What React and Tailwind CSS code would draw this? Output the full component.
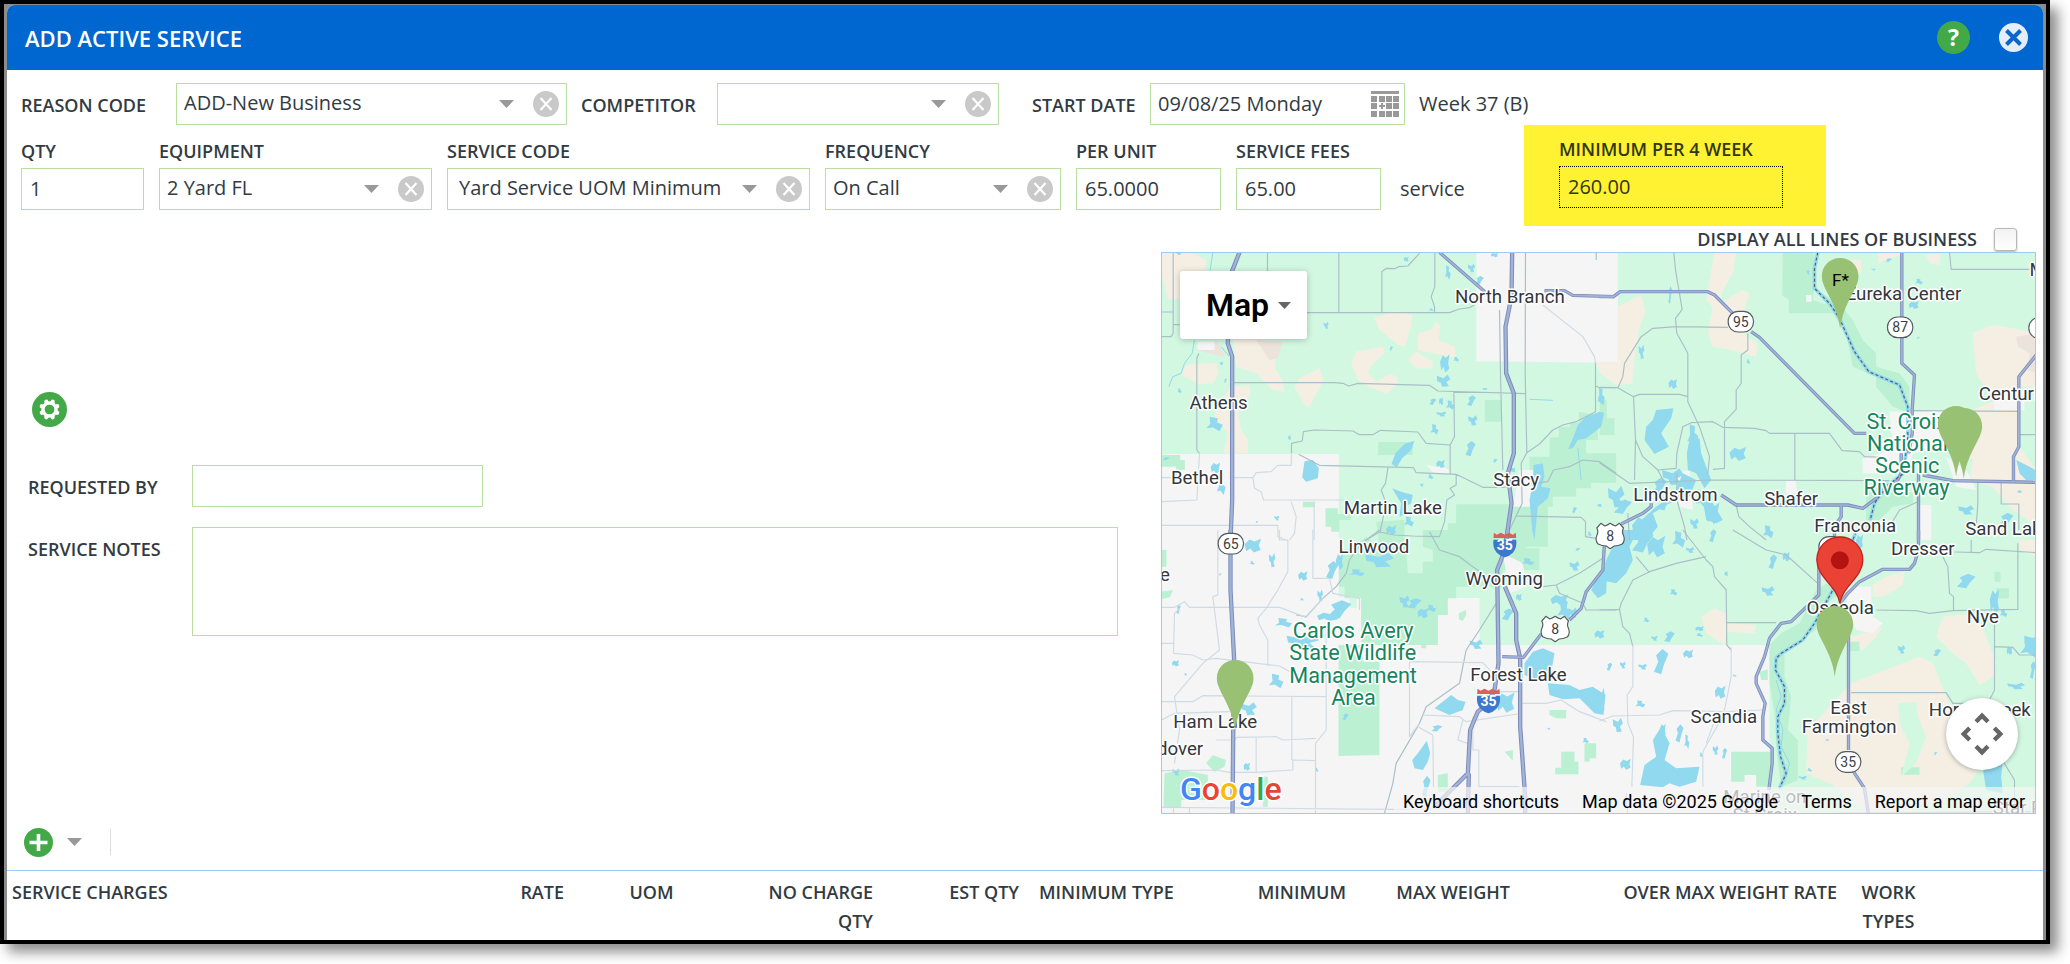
import React from "react";

const LABEL = "text-[18px] leading-6 font-semibold text-[#323b42] whitespace-nowrap";
const VALUE = "text-[20px] leading-6 text-[#323b42]";
const BOX = "h-[42px] border border-[#b9df9f] bg-white";

function Caret() {
  return (
    <svg className="h-2 w-[15px] shrink-0" viewBox="0 0 15 8" aria-hidden="true">
      <path d="M0 0H15L7.5 8Z" fill="#999999" />
    </svg>
  );
}

function ClearButton({ label }) {
  return (
    <button type="button" aria-label={label} className="size-[26px] shrink-0">
      <svg viewBox="0 0 26 26" className="size-full">
        <circle cx="13" cy="13" r="13" fill="#c9c9c9" />
        <path d="M7.5 7L18.5 19M18.5 7L7.5 19" stroke="#fff" strokeWidth="2.2" fill="none" />
      </svg>
    </button>
  );
}

function ComboBox({ id, value, name, className }) {
  return (
    <div className={`flex items-center ${BOX} pr-[7px] ${className}`}>
      <select id={id} defaultValue={value} className={`h-full min-w-0 flex-1 appearance-none bg-transparent pb-0.5 outline-none ${VALUE}`}>
        <option value={value}>{value}</option>
      </select>
      <Caret />
      <span className="w-[19px] shrink-0" />
      <ClearButton label={`Clear ${name}`} />
    </div>
  );
}

function Field({ id, label, children }) {
  return (
    <div className="flex flex-col gap-[5px] pt-3.5">
      <label htmlFor={id} className={LABEL}>{label}</label>
      {children}
    </div>
  );
}

function CalendarIcon() {
  const cells = [];
  [5, 12, 20].forEach((y, r) =>
    [0, 8, 15, 22].forEach((x, c) => {
      if (r === 1 && c === 1) return;
      cells.push(<rect key={`${r}${c}`} x={x} y={y} width="6" height="6" />);
    })
  );
  return (
    <svg viewBox="0 0 28 26" className="h-[26px] w-7" fill="#999999">
      <rect width="28" height="3" />
      {cells}
      <path d="M10 12H12V14H14V16H12V18H10V16H8V14H10Z" />
    </svg>
  );
}

/* ---------- map drawing ---------- */

/* Each layer is drawn in four tiles: north-west, north-east, south-west, south-east. */
function Layer({ nw, ne, sw, se, ...rest }) {
  return (
    <g {...rest}>
      {nw && <path d={nw} />}
      {ne && <path d={ne} transform="translate(1350 0)" />}
      {sw && <path d={sw} transform="translate(0 870)" />}
      {se && <path d={se} transform="translate(1350 870)" />}
    </g>
  );
}

const blobShapes = [
  "M-50 -10L-20 -45L10 -30L50 -50L35 0L48 30L5 50L-15 20L-40 40Z",
  "M-30 -50L20 -40L15 -10L50 5L30 50L-10 25L-50 30L-25 0Z",
  "M-50 -40L0 -20L30 -50L50 -10L20 10L40 45L-10 50L-20 15L-45 5Z",
  "M10 -50L50 -30L20 10L0 50L-50 40L-20 0L-35 -25Z",
];

/* x, y, width, height */
const lakes = [
  [770, 58, 14, 14], [895, 98, 16, 40], [966, 84, 20, 24], [990, 121, 24, 24], [1035, 45, 20, 12],
  [845, 209, 14, 8], [530, 256, 14, 20], [725, 325, 10, 12], [886, 370, 26, 50], [920, 358, 16, 14],
  [882, 422, 38, 34], [850, 485, 20, 18], [875, 484, 12, 22], [902, 495, 24, 26], [876, 522, 28, 14],
  [966, 482, 24, 30], [1006, 447, 14, 6], [855, 568, 22, 30], [970, 541, 26, 28], [963, 626, 28, 42],
  [873, 672, 24, 22], [843, 710, 16, 14], [817, 735, 10, 10], [1037, 662, 14, 10], [1090, 690, 16, 14],
  [90, 452, 12, 14], [216, 370, 10, 10], [228, 422, 8, 12], [420, 593, 8, 14], [195, 552, 46, 40],
  [88, 41, 14, 8], [50, 656, 20, 8], [198, 684, 26, 30], [215, 738, 24, 50], [382, 834, 14, 14],
  [322, 846, 8, 6], [725, 870, 28, 26], [778, 845, 28, 28], [1355, 478, 16, 24], [1275, 810, 14, 16],
  [1350, 796, 12, 10], [1320, 882, 12, 14],
  [1476, 335, 16, 40], [1562, 165, 10, 50], [1570, 432, 24, 28], [1796, 365, 10, 14], [1976, 97, 8, 14],
  [2218, 60, 20, 10], [2293, 195, 28, 22], [2308, 125, 22, 16], [2172, 88, 12, 6], [2306, 293, 10, 5],
  [1765, 642, 46, 38], [1355, 470, 20, 50], [1400, 770, 46, 60], [1420, 800, 50, 40], [1480, 862, 60, 60],
  [1856, 875, 30, 36], [2450, 810, 44, 26], [2570, 840, 40, 40], [2610, 755, 12, 8], [1630, 585, 30, 60],
  [1570, 710, 60, 46], [1530, 740, 40, 50], [1690, 820, 36, 60], [1655, 775, 30, 50], [1635, 850, 24, 30],
  [1545, 790, 26, 40],
  [310, 917, 46, 38], [308, 969, 14, 10], [368, 960, 18, 40], [212, 1003, 8, 6], [460, 1008, 26, 26],
  [457, 1078, 10, 8], [512, 1066, 16, 32], [548, 990, 34, 50], [570, 965, 20, 46], [622, 998, 44, 20],
  [690, 960, 80, 40], [570, 1108, 66, 50], [535, 1130, 60, 24], [402, 1148, 48, 26], [460, 1205, 90, 40],
  [87, 1108, 12, 26], [78, 1270, 20, 18], [108, 1303, 8, 8], [765, 1084, 28, 34], [795, 1090, 40, 28],
  [820, 1120, 30, 28], [845, 1105, 28, 20], [980, 1213, 36, 26], [1075, 1123, 34, 32], [1108, 1072, 16, 20],
  [1135, 965, 36, 20], [1275, 978, 28, 26], [1285, 928, 16, 8], [1350, 1183, 28, 24], [380, 1323, 40, 40],
  [298, 1406, 44, 36], [588, 1430, 18, 18], [292, 1580, 18, 22], [502, 1590, 8, 12], [80, 1596, 22, 20],
  [862, 1465, 30, 18], [1068, 1388, 50, 56], [1308, 1502, 18, 16], [1198, 1466, 8, 6], [830, 1640, 24, 60],
  [1230, 1080, 50, 30], [1245, 1110, 40, 50], [1270, 1118, 24, 30],
  [1480, 905, 60, 60], [1520, 920, 50, 60], [1588, 898, 36, 46], [1622, 930, 24, 16], [1690, 887, 20, 36],
  [1730, 1001, 10, 14], [1572, 1057, 22, 18], [1856, 1053, 36, 26], [1870, 965, 24, 40], [1910, 950, 20, 26],
  [1490, 1140, 16, 14], [1515, 1195, 18, 14], [1560, 1190, 30, 30], [1650, 1166, 24, 14], [1650, 1185, 20, 10],
  [1480, 1280, 24, 16], [1535, 1265, 40, 70], [1616, 1242, 28, 24], [1472, 1392, 28, 20], [1420, 1275, 16, 20],
  [1380, 1280, 16, 22], [1712, 1357, 30, 36], [1755, 1307, 12, 6], [1405, 1455, 28, 40], [1590, 1480, 22, 50],
  [1540, 1470, 16, 36], [1612, 1505, 14, 40], [1698, 1530, 16, 26], [1725, 1540, 14, 30], [1428, 1573, 30, 30],
  [1655, 1545, 10, 14], [1356, 1378, 20, 66], [2450, 1023, 52, 40], [2535, 1085, 26, 70], [2562, 1120, 22, 20],
  [2256, 1228, 20, 24], [2363, 1238, 22, 20], [2580, 1232, 16, 24], [2640, 1220, 50, 60], [2600, 1338, 50, 18],
  [2650, 1290, 16, 50], [2033, 1500, 10, 6], [1980, 1590, 14, 10], [1960, 1613, 24, 10], [2358, 1540, 10, 8],
  [2130, 905, 20, 40],
];

const bigLakes =
  "M465 664L490 660L508 685L505 715L470 725L458 712Z" +
  "M765 612L795 602L785 630L758 655L742 682L726 672L738 640Z" +
  "M1350 515L1364 518L1355 560L1330 580L1310 595L1285 600L1270 625L1256 628L1272 590L1285 555L1310 530Z" +
  "M1152 675L1180 670L1185 710L1175 740L1203 745L1195 775L1165 800L1155 900L1148 870L1140 780L1150 730Z" +
  "M728 745L755 755L790 765L785 790L760 805L770 820L750 830L755 790Z" +
  "M1150 1235L1180 1225L1215 1240L1208 1280L1190 1310L1160 1320L1125 1305L1125 1270Z" +
  "M1195 1330L1260 1335L1290 1350L1330 1340L1368 1365L1362 1425L1335 1420L1290 1375L1240 1378L1200 1365Z" +
  "M855 1405L905 1365L925 1380L948 1385L940 1410L900 1425Z" +
  "M832 1502L842 1540L835 1565L820 1590L795 1585L788 1560L805 1540Z" +
  "M1490 560L1510 540L1520 510L1572 505L1565 535L1535 580L1558 620L1515 642L1485 600Z" +
  "M1620 600L1650 595L1655 640L1670 680L1685 720L1665 745L1640 700L1615 690L1612 640Z" +
  "M1575 760L1600 700L1640 720L1620 770L1560 790L1510 820L1525 860L1490 900H1445L1465 850L1520 800Z" +
  "M1660 780L1690 790L1720 840L1700 850L1670 840Z" +
  "M1390 870H1465L1440 920L1450 960L1430 1000L1400 1030L1352 1020L1370 960L1390 920Z" +
  "M1350 1000L1372 1010L1370 1060L1345 1075L1325 1050Z" +
  "M1535 1460L1560 1510L1545 1560L1580 1585L1650 1580L1640 1625L1590 1640L1560 1630L1540 1642L1472 1635L1485 1575L1520 1550L1510 1500Z" +
  "M2600 660L2640 680L2658 690V720H2630L2610 700Z" +
  "M2500 1560H2560L2555 1610L2560 1660L2510 1650L2502 1600Z" +
  "M2625 1205L2658 1190V1245L2635 1240Z";

function MajorRoads(props) {
  return (
    <Layer
      fill="none"
      strokeLinejoin="round"
      nw="M270 37L245 100L235 310L248 350V780L243 900M1088 37L1086 170L1068 260L1070 400L1093 460V640L1075 700L1086 790L1070 900"
      sw="M243 0V180L254 390L252 500L249 860M1075 0L1066 60L1043 120L1047 400L1035 480L1015 520L985 545L962 600L955 730L860 825M958 730L955 860M1066 170L1100 250V330L1112 385V590L1127 800V860"
      {...props}
    />
  );
}

function MidRoads(props) {
  return (
    <Layer
      fill="none"
      strokeLinejoin="round"
      nw="M870 37L1000 150L1020 170M1185 152H1245L1270 166L1395 170"
      ne="M0 170H42L62 155H325L345 165L400 220M455 275L480 292L765 580H800M907 37V370L945 405L938 510V580L928 640M970 705L1060 722L1310 727M1242 722V650L1258 620V410L1310 345M65 852L130 820L155 800V790M365 765L410 795H745L790 805L830 775L860 740L895 720L905 700V640M725 795V830L705 860V900M957 700V900"
      sw="M1058 380L1122 382L1175 312M1260 270L1295 235L1310 185L1360 120L1365 40"
      se="M957 0V60L945 100L930 118H850L780 155L745 190L722 220M658 80V195L575 275L545 280L510 325L495 380L470 440V460L497 520L490 560V630L518 655V700L508 780M747 300V660M762 725L795 775L808 860"
      {...props}
    />
  );
}

function Roads() {
  return (
    <g>
      <Layer
        fill="none"
        stroke="#a9bfc8"
        strokeWidth="3.5"
        strokeLinejoin="round"
        nw="M36 216H71M71 37V280L65 290H36M71 254H90M354 37V95M568 37V218M470 218H900L930 207L960 203L975 195M697 218V95L710 85L735 86L748 80L775 78L810 40M856 37V140L845 170L855 200V218M250 428H555L580 430L598 438L625 430L840 436L865 453L1127 461M913 455L915 590L902 615V702M1050 210L1053 400L1060 690M1128 37L1127 400L1132 640M1340 37V60M1338 365V515L1280 545L1240 555L1210 570L1170 612L1132 638L1115 670L1118 790L1080 870M1338 438L1350 443H1400M426 640V610L458 603L462 575L495 570L610 573L630 584H670L693 571L805 576L830 610L902 615M447 643L510 676L792 683L800 698L920 703L1000 742H1060M716 680L708 730L695 750L710 790L692 875M920 703V735L902 745L915 765L892 780L885 845L870 890L790 888L735 885L690 876L650 900M1060 742L1195 725L1212 690L1260 680L1300 660L1350 665L1400 700M1100 828L1295 832L1308 845V890L1340 895M148 340L142 355V630L150 640"
        ne="M223 37L228 90L248 208L228 235L232 280L265 340V485L300 560L330 650L325 700M0 442L55 443L70 410L75 370L125 290L160 265L230 260L385 262M55 443L102 470L120 463H240L265 470M102 470L108 600L130 650L175 690L230 685L232 640L250 560L275 548L340 545L370 562L465 565L500 572L510 580H690L728 632L780 635L795 650L850 652M445 280V330L425 345V430L410 450V508L375 545V685L340 688M108 600L105 720M0 668L90 730L335 720L870 722M586 580V722M175 690L195 728M232 700V780L255 860L262 900M85 820L90 900M410 795L418 830L450 860L500 900M1050 37L1055 88H1310M940 512L1255 514M1258 584H1310M1205 727V792H1258V870M1135 727V790L1130 860M870 860L900 810L955 785"
        sw="M690 0L650 30L620 60L600 90L590 130L560 170L520 205L470 260L440 255M840 5L870 60L930 80L970 110L1040 160M1040 220L990 300L950 360L940 410L930 460L830 530L810 580L740 700L730 760L705 850M1220 165L1230 190L1300 220L1310 240H1400M1220 165L1290 130L1360 85M1180 170L1220 165"
        se="M250 0L320 90L340 110L345 140L380 180L382 345L395 360M0 240L60 238L65 220L100 150L150 125L230 100L320 80M60 238L70 290L90 310L100 350M110 80L150 128M380 278H530M400 0L500 60L560 75L655 160M1030 80L1045 110L1050 190L1062 200V240M830 240L950 242L990 250L1060 242L1255 238V40M1065 66L1140 68L1160 58L1310 68M1185 280V480L1170 510M1185 350L1240 352L1260 375H1310M755 488H1040L1060 520H1130M1115 30V66M1190 660L1245 750L1245 850M700 850L1310 845M80 790L85 850"
      />
      <Layer
        fill="none"
        stroke="#cfdbe4"
        strokeWidth="3.5"
        strokeLinejoin="round"
        nw="M150 640L142 780L36 785M36 713H90M240 713H310L315 745L335 755L342 780H600M310 713L320 698L365 695L385 676H425L426 640M1180 195L1300 290L1335 350L1338 370M36 856H385V890L410 900M425 785L440 830L435 880L420 900M494 785V900"
        sw="M36 232H75L105 215L120 232H390L470 262L520 205M36 340H72M90 235L75 250L72 370L130 375L160 390L200 385L390 408L440 435L530 438M205 0V195L190 200L210 360L160 400L75 500L90 600L75 700M390 0V30H415V125L382 185L350 235L325 265L330 285L355 330V408M490 0V145H540L550 190L630 205V240M36 515H130L160 497L530 500M530 290V600L498 640V850M36 570L75 550L240 545M200 630H255L262 622L380 620L400 630L500 625M320 620V725M36 722L200 720L240 727H320L430 720V690L498 692M427 500V690M36 832L730 838M72 832V860M120 832V860M780 395V620L810 580M780 395L1000 398L1030 430M820 555L930 560L950 575L1105 552M805 590L850 615L852 770M940 570L925 630L955 640M970 560V660H988V770L1110 770M1040 485H1110M1118 520H1190L1235 510L1290 545L1370 575M730 838L950 835"
        se="M0 573L40 558L180 555L220 542L380 545L490 540M100 345V470L83 495L85 580L102 620L97 770M395 350L395 440L375 540L355 585L310 665V770M350 560L320 640"
      />
      <MajorRoads stroke="#7b8cbb" strokeWidth="13" />
      <MajorRoads stroke="#a2b3d7" strokeWidth="7" />
      <MidRoads stroke="#7b8cbb" strokeWidth="10" />
      <MidRoads stroke="#a2b3d7" strokeWidth="5" />
    </g>
  );
}

function River(props) {
  return (
    <Layer
      fill="none"
      ne="M655 37L645 85V145L690 190L720 235L740 280L765 335L808 395L900 435L925 500V590L912 700L860 740L825 790L812 840"
      se="M770 5L700 180L645 280L610 330L545 370L530 385L528 420L555 470V520L535 560V610L543 680L560 730L540 775"
      {...props}
    />
  );
}

const towns = [
  [1081, 190, "North Branch"], [207, 506, "Athens"], [143, 733, "Bethel"], [730, 823, "Martin Lake"],
  [1100, 739, "Stacy"], [673, 940, "Linwood"], [1064, 1036, "Wyoming"], [1107, 1324, "Forest Lake"],
  [197, 1464, "Ham Lake"], [1578, 783, "Lindstrom"], [1925, 795, "Shafer"], [2117, 876, "Franconia"],
  [2262, 180, "Eureka Center"], [2320, 946, "Dresser"], [2500, 1150, "Nye"], [1723, 1448, "Scandia"],
  [2097, 1422, "East"], [2099, 1479, "Farmington"], [2072, 1121, "Osceola"],
];

const edgeTowns = [
  [2488, 480, "Centuria"], [2447, 885, "Sand Lake"], [2640, 107, "Milltown"], [2338, 1428, "Horse Creek"],
];

function StateShield({ x, y, text }) {
  return (
    <g>
      <rect x={x - 38} y={y - 31} width="76" height="62" rx="30" fill="#fff" stroke="#555b60" strokeWidth="3.5" />
      {text && <text x={x} y={y + 15} textAnchor="middle" fontSize="42" fill="#3c4043">{text}</text>}
    </g>
  );
}

function UsShield({ x, y }) {
  return (
    <g transform={`translate(${x} ${y})`}>
      <path
        d="M-28 -38L-16 -30Q-8 -32 0 -38Q8 -32 16 -30L28 -38L40 -24Q34 -12 40 -2Q46 14 36 24Q24 30 12 30L0 38L-12 30Q-24 30 -36 24Q-46 14 -40 -2Q-34 -12 -40 -24Z"
        fill="#fff"
        stroke="#555b60"
        strokeWidth="3.5"
        strokeLinejoin="round"
      />
      <text x="0" y="15" textAnchor="middle" fontSize="42" fill="#3c4043">8</text>
    </g>
  );
}

function Interstate({ x, y }) {
  return (
    <g transform={`translate(${x} ${y})`}>
      <path d="M-34 -15H34Q38 8 24 24Q14 34 0 38Q-14 34 -24 24Q-38 8 -34 -15Z" fill="#3b78d0" />
      <path d="M-33 -36L-24 -30L-12 -36L0 -30L12 -36L24 -30L33 -36L34 -20H-34Z" fill="#d9605c" />
      <text x="0" y="17" textAnchor="middle" fontSize="42" fontWeight="700" fill="#fff">35</text>
    </g>
  );
}

function Pin({ x, y }) {
  return (
    <path
      transform={`translate(${x} ${y})`}
      d="M0 -212C31 -212 55 -188 55 -157C55 -118 10 -80 0 0C-10 -80 -55 -118 -55 -157C-55 -188 -31 -212 0 -212Z"
      fill="#99c174"
    />
  );
}

function MapDrawing() {
  return (
    <svg
      className="block h-[560px] w-full"
      viewBox="36 39 2622 1680"
      preserveAspectRatio="xMidYMid slice"
      fontFamily="Roboto, sans-serif"
      role="img"
      aria-label="Map of service locations"
    >
      <rect x="0" y="0" width="2700" height="1760" fill="#d3f8e2" />

      <g fill="#f5f5f5">
        <path d="M981 37H1405V368L981 364ZM36 642H568V1070H635V1215H865V1074H990V1215H1860V1740H36Z" />
      </g>
      <Layer
        fill="#f5efe3"
        nw="M36 37H120L170 60L165 130L120 160L75 180L55 177L36 100ZM250 300H330L380 350L375 380L400 425L405 455L370 450L320 400L260 380ZM110 375L150 372L200 370L208 400L190 430L150 432L95 405ZM450 415L510 385L522 420L480 500L465 495L435 440ZM675 235L735 213L787 225L785 260L765 320L740 310L690 270ZM620 335L700 320L705 340L670 370L655 400L680 425L720 403L745 410V430L712 462L660 440L625 420L605 370ZM805 280L845 270L858 245L872 255L868 300L915 320L920 355L850 340L805 330ZM775 360L800 335L850 365L848 385L800 385ZM200 500L245 440L300 435L303 460L265 520L275 570L295 600V640H222L235 580L195 530ZM1338 368H1400V405L1345 385Z"
        ne="M345 37H410L400 100L370 150L360 190L430 150L450 160L430 220L440 290L475 310L470 350L400 330L340 320L325 280L340 200L320 180ZM55 200L125 165L138 215L120 260L105 350L98 430L50 435L0 400V365H55ZM840 37H900V45L860 60L835 70ZM980 45L1020 40L1022 75L990 70ZM1120 280L1180 255L1240 265L1310 280V440L1260 440L1180 480L1130 400ZM1120 510L1190 480L1258 500V620L1310 690V640V860L1230 800L1180 740L1110 720L1120 660L1040 600ZM740 60h45v40h-45z"
        se="M305 260L345 235L380 250L385 280L470 285L465 310L380 305L375 345L320 310ZM820 165L860 140L915 125L910 165L850 200H820ZM1030 260L1130 250L1160 320L1190 400L1180 440L1140 465L1100 400L1060 370L1010 320ZM755 460L960 380L1000 400L1040 500L1100 600L1150 700L1110 760L1040 800L900 850H800L700 765L620 730L625 600L700 520ZM660 300L760 320L850 290L830 320L790 360L750 345ZM1260 30H1310V80L1260 60Z"
      />
      <Layer fill="#ebe3dc" nw="M320 300L400 305L385 355L360 360ZM140 330L200 300L230 350L200 345Z" ne="M1250 290L1310 280V400L1285 390L1290 340L1255 320Z" />
      <Layer
        fill="#bcf0d2"
        nw="M36 645H92V660H106V690H80V680H36ZM686 606H790V645H686ZM1006 480h50v65h-50zM1200 592L1228 592V562L1262 560V548H1288V515L1340 525L1365 515V560H1345V600H1310V640H1400V728H1325V745H1280V770H1210V800H1195V920H1110V792H1140V650H1200ZM920 793H1110V920H895V850H920ZM460 785h35v17h-35zM528 805H565V822H605V840H570V875H545V860H528ZM680 845L765 840V920H690Z"
        ne="M550 37H645V140L640 180L700 200V220H568V180L548 165ZM650 150L720 190L760 240L790 300L830 340V380L900 400L930 440V520L880 500L830 440V410L760 380L740 280L700 220ZM0 478L22 480V535H45V585H0ZM0 700h25v28h-25zM800 740L860 720L940 760V790L880 800L830 850L800 870Z"
        sw="M590 60L650 20L690 50H770L775 130H820V95H850V60L820 50V0H1060V90L1100 60V0H1130V55H1170V120H1060V170H920V205H895V255H865V345H830V355H815V345H635V205H585V170H568V100ZM640 345V395H690V675L567 678V345ZM36 60h15v50h-15zM36 185l35 -5l-10 22l-25 5zM45 730L100 720L175 735V810H95V832H42ZM170 700L190 675L230 690L225 710L195 725ZM340 740h15v90h-15zM865 735L895 730V785H865ZM1200 540h50v25h-30l-20 -10zM1305 640h35v45h-20v10h-15zM1235 665h40v30h12v38h-70v-20h18zM1065 665l25 -5v32zM928 250l22 -10v15l-10 18l-12 -5z"
        se="M395 665H515V770H470V735H435V755H395ZM480 425L505 418V450H485ZM510 345L545 310L600 280L650 180L700 150L760 120L730 180L650 250V300L600 330L555 370V440L575 500L565 600L595 630V750L545 772L530 650L525 550L510 460ZM750 335h30v28h-30zM1185 125h18v30h-18zM1190 175h38v30h-38zM905 712h55v22h-55z"
      />
      <Layer fill="#d3f8e2" sw="M570 0H590L650 20L590 60L568 70ZM600 202L622 200V235L602 232Z" se="M895 520L950 515L955 560L980 620L950 700L905 740L930 640L900 580Z" />
      <Layer
        fill="#f5f5f5"
        nw="M1110 690H1160V800L1090 800ZM145 305h50v25h-50zM830 675l60 10l20 20l-60 -8z"
        ne="M870 515H960L1040 510V620L940 640L920 700H790V655L880 630ZM1185 450h90v60h-90zM960 795h35v105h-35zM560 720h28l5 40h-35zM620 165h16v20h-16zM230 700l40 -10l10 120l-40 -10zM1040 650l60 40l30 60l-60 -10z"
        sw="M1060 70L1120 100L1130 170L1080 190Z"
        se="M745 170H815V200L820 260L850 280L820 310L770 300L740 240Z"
      />

      <g fill="#90d9ee">
        <path d={bigLakes} />
        {lakes.map(([x, y, w, h], i) => (
          <path key={i} d={blobShapes[i % 4]} transform={`translate(${x} ${y}) scale(${w / 92} ${h / 92})`} />
        ))}
      </g>
      <Layer
        fill="none"
        stroke="#90d9ee"
        strokeWidth="3"
        nw="M190 37L182 90M135 300L128 340L105 370L95 400L70 410L58 440M215 320L238 348M1140 478L1210 481M1285 625L1295 720"
        sw="M300 700L285 720M850 590L875 592"
        se="M530 450L545 500L530 540L550 600L545 650L570 700L560 740"
      />
      <River stroke="#90d9ee" strokeWidth="11" />
      <Roads />
      <River stroke="#555d6e" strokeWidth="3.5" strokeDasharray="9 7" />

      <StateShield x={244} y={911} text="65" />
      <StateShield x={1774} y={245} text="95" />
      <StateShield x={2252} y={262} text="87" />
      <StateShield x={2096} y={1566} text="35" />
      <StateShield x={2676} y={264} />
      <StateShield x={2046} y={921} />
      <UsShield x={1382} y={888} />
      <UsShield x={1217} y={1167} />
      <Interstate x={1066} y={914} />
      <Interstate x={1017} y={1382} />

      <g fontSize="56" fill="#33373c" stroke="#fff" strokeWidth="9" strokeLinejoin="round" style={{ paintOrder: "stroke" }}>
        {towns.map(([x, y, t]) => (
          <text key={t} x={x} y={y} textAnchor="middle">{t}</text>
        ))}
        {edgeTowns.map(([x, y, t]) => (
          <text key={t} x={x} y={y}>{t}</text>
        ))}
        <text x="61" y="1022" textAnchor="end">Bridge</text>
        <text x="161" y="1546" textAnchor="end">Andover</text>
        <text x="1846" y="1688" textAnchor="middle">Marine on</text>
        <text x="1846" y="1744" textAnchor="middle">St Croix</text>
        <text x="2530" y="1722">Star Prairie</text>
      </g>
      <g fontSize="65" fill="#15855c" stroke="#fff" strokeWidth="9" strokeLinejoin="round" textAnchor="middle" style={{ paintOrder: "stroke" }}>
        <text x="611" y="1194">Carlos Avery</text>
        <text x="610" y="1261">State Wildlife</text>
        <text x="611" y="1328">Management</text>
        <text x="612" y="1394">Area</text>
        <text x="2272" y="566">St. Croix</text>
        <text x="2274" y="632">National</text>
        <text x="2273" y="698">Scenic</text>
        <text x="2271" y="765">Riverway</text>
      </g>

      <Pin x={2072} y={266} />
      <text x={2073} y={137} textAnchor="middle" fontSize="52" fill="#000">F*</text>
      <Pin x={2420} y={710} />
      <Pin x={2443} y={716} />
      <Pin x={257} y={1472} />
      <Pin x={2074} y={1100} />
      <Pin x={2056} y={1310} />
      <path
        transform="translate(2071 1090)"
        d="M0 0C-8 -52 -69 -78 -69 -130C-69 -169 -38 -199 0 -199C38 -199 69 -169 69 -130C69 -78 8 -52 0 0Z"
        fill="#ea4335"
        stroke="#c5221f"
        strokeWidth="4"
      />
      <circle cx="2071" cy="961" r="27" fill="#b31412" />
    </svg>
  );
}

function MapPanel() {
  return (
    <div className="relative overflow-hidden border border-[#9cc9f5] font-['Roboto',sans-serif]">
      <MapDrawing />
      <button
        type="button"
        className="absolute top-[18px] left-[18px] flex h-[68px] w-[127px] items-center justify-center gap-[9px] rounded-[3px] bg-white pl-2.5 text-[32px] leading-8 font-semibold text-black shadow-[0_1px_6px_rgba(0,0,0,0.25)]"
      >
        Map
        <svg className="h-[7px] w-[13px]" viewBox="0 0 13 7" aria-hidden="true">
          <path d="M0 0H13L6.5 7Z" fill="#666" />
        </svg>
      </button>
      <button
        type="button"
        aria-label="Map camera controls"
        className="absolute right-[17px] bottom-[43px] size-[72px] rounded-full bg-white shadow-[0_1px_5px_rgba(0,0,0,0.3)]"
      >
        <svg viewBox="0 0 216 216" className="size-full" fill="none" stroke="#666" strokeWidth="13">
          <path d="M90 71L108 53L126 71M90 145L108 163L126 145M71 90L53 108L71 126M145 90L163 108L145 126" />
        </svg>
      </button>
      <svg className="absolute bottom-0.5 left-[18px] h-9 w-[106px]" viewBox="0 0 106 36" role="img" aria-label="Google">
        <text
          x="0"
          y="25"
          fontFamily="Roboto, sans-serif"
          fontSize="32"
          fontWeight="500"
          stroke="#fff"
          strokeWidth="3"
          style={{ paintOrder: "stroke" }}
        >
          <tspan fill="#4285f4">G</tspan>
          <tspan fill="#ea4335">o</tspan>
          <tspan fill="#fbbc05">o</tspan>
          <tspan fill="#4285f4">g</tspan>
          <tspan fill="#34a853">l</tspan>
          <tspan fill="#ea4335">e</tspan>
        </text>
      </svg>
      <div className="absolute right-0 bottom-0 flex h-[26px] items-center gap-[23px] bg-[#f5f5f5]/70 pr-2.5 pl-[9px] pt-1 text-[18px] leading-5 whitespace-nowrap text-black">
        <button type="button">Keyboard shortcuts</button>
        <span>Map data ©2025 Google</span>
        <a href="#terms">Terms</a>
        <a href="#report">Report a map error</a>
      </div>
    </div>
  );
}

/* ---------- page ---------- */

export default function App() {
  return (
    <div className="bg-white pr-5 pb-5 font-['Open_Sans',sans-serif]">
      <div className="border-4 border-black bg-[#8c8c8c] px-[3px] pt-px shadow-[8px_8px_12px_rgba(0,0,0,0.45)]">
        <div className="overflow-hidden rounded-t-[8px] bg-white">
          <header className="flex h-[65px] items-center bg-[#0066d0] pr-[15px] pl-[18px]">
            <h1 className="flex-1 text-[22px] leading-7 font-semibold text-white">ADD ACTIVE SERVICE</h1>
            <button type="button" aria-label="Help" className="mr-[29px] size-[33px] rounded-full bg-[#43a948] text-[23px] leading-[33px] font-bold text-white">
              ?
            </button>
            <button type="button" aria-label="Close" className="size-[29px]">
              <svg viewBox="0 0 29 29" className="size-full">
                <circle cx="14.5" cy="14.5" r="14.5" fill="#e4eefa" />
                <path d="M7.5 7.5L21.5 21.5M21.5 7.5L7.5 21.5" stroke="#0a66cc" strokeWidth="4" fill="none" />
              </svg>
            </button>
          </header>

          <form>
            <div className="flex h-[55px] items-center pt-[13px] pl-3.5">
              <label htmlFor="reason" className={`w-[155px] pt-0.5 ${LABEL}`}>REASON CODE</label>
              <ComboBox id="reason" name="reason code" value="ADD-New Business" className="w-[391px] pl-[7px]" />
              <label htmlFor="competitor" className={`ml-3.5 w-[136px] pt-0.5 ${LABEL}`}>COMPETITOR</label>
              <ComboBox id="competitor" name="competitor" value="" className="w-[282px] pl-[7px]" />
              <label htmlFor="start" className={`ml-[33px] w-[118px] pt-0.5 ${LABEL}`}>START DATE</label>
              <div className={`flex w-[255px] items-center pr-[5px] pl-[7px] ${BOX}`}>
                <input id="start" defaultValue="09/08/25 Monday" className={`h-full min-w-0 flex-1 bg-transparent pb-0.5 outline-none ${VALUE}`} />
                <button type="button" aria-label="Open calendar">
                  <CalendarIcon />
                </button>
              </div>
              <span className={`ml-3.5 ${VALUE}`}>Week 37 (B)</span>
            </div>

            <div className="flex items-start pl-3.5">
              <div className="flex gap-[15px]">
                <Field id="qty" label="QTY">
                  <input id="qty" defaultValue="1" className={`w-[123px] px-2 pb-0.5 outline-none ${BOX} ${VALUE}`} />
                </Field>
                <Field id="equipment" label="EQUIPMENT">
                  <ComboBox id="equipment" name="equipment" value="2 Yard FL" className="w-[273px] pl-[7px]" />
                </Field>
                <Field id="service-code" label="SERVICE CODE">
                  <ComboBox id="service-code" name="service code" value="Yard Service UOM Minimum" className="w-[363px] pl-[11px]" />
                </Field>
                <Field id="frequency" label="FREQUENCY">
                  <ComboBox id="frequency" name="frequency" value="On Call" className="w-[236px] pl-[7px]" />
                </Field>
                <Field id="per-unit" label="PER UNIT">
                  <input id="per-unit" defaultValue="65.0000" className={`w-[145px] px-2 pb-0.5 outline-none ${BOX} ${VALUE}`} />
                </Field>
                <Field id="fees" label="SERVICE FEES">
                  <input id="fees" defaultValue="65.00" className={`w-[145px] px-2 pb-0.5 outline-none ${BOX} ${VALUE}`} />
                </Field>
              </div>
              <span className={`mt-[52px] ml-[19px] w-[124px] ${VALUE}`}>service</span>
              <div className="flex w-[302px] flex-col gap-[5px] bg-[#fff233] px-[35px] pt-3 pb-[18px]">
                <label htmlFor="minimum" className="text-[18px] leading-6 font-semibold whitespace-nowrap text-[#323714]">MINIMUM PER 4 WEEK</label>
                <input
                  id="minimum"
                  defaultValue="260.00"
                  className="h-[42px] w-56 border border-dotted border-black bg-transparent px-2 pb-0.5 text-[20px] leading-6 text-[#323714] outline-none"
                />
              </div>
            </div>

            <div className="grid grid-cols-[1154fr_875fr] items-start pr-[7px]">
              <div className="min-w-0 pt-[166px] pr-[43px] pl-[21px]">
                <button type="button" aria-label="Settings" className="ml-1 block size-[35px]">
                  <svg viewBox="0 0 35 35" className="size-full">
                    <circle cx="17.5" cy="17.5" r="17.5" fill="#43a948" />
                    <circle cx="17.5" cy="17.5" r="6.4" fill="none" stroke="#fff" strokeWidth="3.6" />
                    <g stroke="#fff" strokeWidth="4.2" strokeLinecap="round">
                      <path d="M14.6 10.5L14.3 9.8M20.4 10.5L20.7 9.8M24.5 14.6L25.2 14.3M24.5 20.4L25.2 20.7M20.4 24.5L20.7 25.2M14.6 24.5L14.3 25.2M10.5 20.4L9.8 20.7M10.5 14.6L9.8 14.3" />
                    </g>
                    <circle cx="17.5" cy="17.5" r="4.8" fill="#43a948" />
                  </svg>
                </button>
                <div className="mt-[38px] flex items-center">
                  <label htmlFor="requested" className={`w-[164px] pt-0.5 ${LABEL}`}>REQUESTED BY</label>
                  <input id="requested" className={`w-[291px] px-2 outline-none ${BOX} ${VALUE}`} />
                </div>
                <div className="mt-5 flex items-start">
                  <label htmlFor="notes" className={`w-[164px] pt-2.5 ${LABEL}`}>SERVICE NOTES</label>
                  <textarea id="notes" className={`block h-[109px] min-w-0 flex-1 resize-none border border-[#b9df9f] bg-white p-2 outline-none ${VALUE}`} />
                </div>
              </div>

              <div className="min-w-0">
                <div className="flex h-[26px] items-center justify-end gap-[17px] pr-[19px]">
                  <label htmlFor="lines" className={LABEL}>DISPLAY ALL LINES OF BUSINESS</label>
                  <input
                    id="lines"
                    type="checkbox"
                    className="size-[23px] appearance-none rounded-[3px] border border-[#b8b8b8] bg-linear-to-b from-[#f2f2f2] to-white shadow-[0_1px_2px_rgba(0,0,0,0.3)]"
                  />
                </div>
                <MapPanel />
              </div>
            </div>
          </form>

          <div className="flex h-14 items-center pl-[17px]">
            <button type="button" aria-label="Add charge" className="size-[29px]">
              <svg viewBox="0 0 29 29" className="size-full">
                <circle cx="14.5" cy="14.5" r="14.5" fill="#43a948" />
                <path d="M14.5 6V23M5.5 14.5H23.5" stroke="#fff" strokeWidth="3.6" fill="none" />
              </svg>
            </button>
            <button type="button" aria-label="More add options" className="ml-3.5">
              <Caret />
            </button>
            <span className="ml-7 h-[26px] w-px bg-[#dcdcdc]" />
          </div>

          <table className="w-full table-fixed border-t border-[#9cc9f5] text-[18px] leading-[29px] text-[#323b42]">
            <colgroup>
              <col />
              <col className="w-[139px]" />
              <col className="w-[165px]" />
              <col className="w-[144px]" />
              <col className="w-[146px]" />
              <col className="w-[160px]" />
              <col className="w-[167px]" />
              <col className="w-[164px]" />
              <col className="w-[327px]" />
              <col className="w-[93px]" />
              <col className="w-[108px]" />
            </colgroup>
            <thead>
              <tr className="h-[69px] align-top [&>th]:pt-[7px] [&>th]:font-semibold">
                <th scope="col" className="pl-[5px] text-left whitespace-nowrap">SERVICE CHARGES</th>
                <th scope="col" className="pr-[5px] text-right">RATE</th>
                <th scope="col" className="text-center">UOM</th>
                <th scope="col" className="pr-[5px] pl-5 text-right">NO CHARGE QTY</th>
                <th scope="col" className="pr-[5px] text-right whitespace-nowrap">EST QTY</th>
                <th scope="col" className="pl-[15px] text-left whitespace-nowrap">MINIMUM TYPE</th>
                <th scope="col" className="pr-[5px] text-right">MINIMUM</th>
                <th scope="col" className="pr-[5px] text-right whitespace-nowrap">MAX WEIGHT</th>
                <th scope="col" className="pr-[5px] text-right whitespace-nowrap">OVER MAX WEIGHT RATE</th>
                <th scope="col" className="px-[15px] text-center">WORK TYPES</th>
                <td />
              </tr>
            </thead>
          </table>
        </div>
      </div>
    </div>
  );
}
